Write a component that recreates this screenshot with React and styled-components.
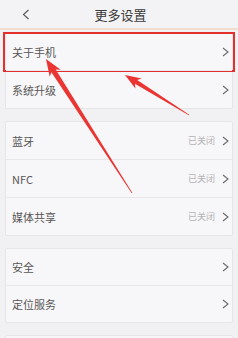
import React from 'react';
import styled, { createGlobalStyle } from 'styled-components';

const Global = createGlobalStyle`
  html, body {
    margin: 0;
    padding: 0;
    background: #f1f0f2;
  }
  body {
    font-family: "Noto Sans CJK SC", "Noto Sans", sans-serif;
  }
`

const Page = styled.div`
  position: relative;
  width: 238px;
  height: 338px;
  overflow: hidden;
  background: #f1f0f2;
`
const Header = styled.div`
  height: 28px;
  border-bottom: 2px solid #f1ddd0;
  background: #f3f2f4;
  display: flex;
  align-items: center;
  justify-content: center;
  position: relative;
`
const Back = styled.svg`
  position: absolute;
  left: 22px;
  top: 9px;
`
const Title = styled.div`
  font-size: 13px;
  color: #3a3a3a;
  padding-left: 3px;
`
const List = styled.div`
  display: flex;
  flex-direction: column;
  gap: 12px;
  padding: 2px 5px 0 5px;
`
const Card = styled.div`
  background: #f7f6f8;
  border: 1px solid #e6e5e8;
  border-radius: 2px;
  display: flex;
  flex-direction: column;
`
const Row = styled.div`
  position: relative;
  height: ${p => p.h}px;
  display: flex;
  align-items: center;
  padding: 0 3px 0 6px;
  border-top: ${p => (p.first ? 'none' : '1px solid #e8e7ea')};
`
const Label = styled.span`
  flex: 1;
  font-size: 11px;
  color: #575757;
`
const Status = styled.span`
  font-size: 9px;
  color: #b4b4b4;
  margin-right: 7px;
`
const Highlight = styled.div`
  position: absolute;
  top: -1px;
  left: -3px;
  right: -3px;
  bottom: -2px;
  border: 2px solid #e3302e;
`
const Overlay = styled.svg`
  position: absolute;
  left: 0;
  top: 0;
  pointer-events: none;
`

function Chevron() {
  return (
    <svg width="7" height="10" viewBox="0 0 7 10">
      <polyline points="1,1 6,5 1,9" fill="none" stroke="#6a6a6a" strokeWidth="1.1" />
    </svg>
  )
}

function arrowPoints(tip, tail, h, w, neck, end) {
  const dx = tail[0] - tip[0]
  const dy = tail[1] - tip[1]
  const len = Math.hypot(dx, dy)
  const ux = dx / len, uy = dy / len
  const nx = -uy, ny = ux
  const p = (b, a, s) => [b[0] + ux * a + nx * s, b[1] + uy * a + ny * s]
  const pts = [
    tip,
    p(tip, h, w),
    p(tip, h - 3, neck),
    p(tail, 0, end),
    p(tail, 0, -end),
    p(tip, h - 3, -neck),
    p(tip, h, -w),
  ]
  return pts.map(q => q[0].toFixed(1) + ',' + q[1].toFixed(1)).join(' ')
}

const groups = [
  { h: 37, rows: [{ label: '关于手机', mark: true }, { label: '系统升级' }] },
  {
    h: 37,
    rows: [
      { label: '蓝牙', status: '已关闭' },
      { label: 'NFC', status: '已关闭' },
      { label: '媒体共享', status: '已关闭' },
    ],
  },
  { h: 36, rows: [{ label: '安全' }, { label: '定位服务' }] },
  { h: 36, rows: [{ label: '' }] },
]

export default function App() {
  return (
    <Page>
      <Global />
      <Header>
        <Back width="8" height="11" viewBox="0 0 8 11">
          <polyline points="6.5,1 1.5,5.5 6.5,10" fill="none" stroke="#555" strokeWidth="1.1" />
        </Back>
        <Title>更多设置</Title>
      </Header>
      <List>
        {groups.map((g, i) => (
          <Card key={i}>
            {g.rows.map((r, j) => (
              <Row key={j} h={g.h} first={j === 0}>
                <Label>{r.label}</Label>
                {r.status && <Status>{r.status}</Status>}
                {r.label && <Chevron />}
                {r.mark && <Highlight />}
              </Row>
            ))}
          </Card>
        ))}
      </List>
      <Overlay width="238" height="338">
        <polygon points={arrowPoints([46, 59], [132, 193], 17, 6.5, 2.6, 0.4)} fill="#ea3532" />
        <polygon points={arrowPoints([125, 75], [189, 115], 16, 6, 2.2, 0.4)} fill="#ea3532" />
      </Overlay>
    </Page>
  )
}
